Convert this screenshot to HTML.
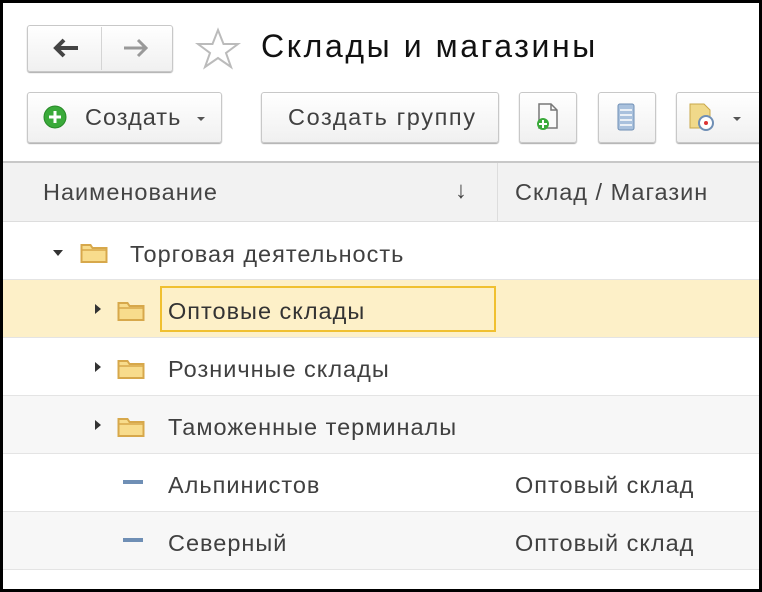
<!DOCTYPE html><html><head><style>
body{margin:0;width:762px;height:592px;background:#000;position:relative;overflow:hidden;font-family:"Liberation Sans",Arial,sans-serif}
#w{position:absolute;left:3px;top:3px;width:756px;height:586px;background:#fff;overflow:hidden}
.a{position:absolute}
.btn{position:absolute;border:1px solid #c8c8c8;border-radius:3px;background:linear-gradient(#fff,#f0f0f0);box-shadow:0 1px 1px #aaa;box-sizing:border-box}
.t{position:absolute;font-size:23.5px;color:#404040;white-space:nowrap;letter-spacing:1px}
.row{position:absolute;left:0;width:756px;height:57px;border-bottom:1px solid #e4e4e4}
.fold{position:absolute;width:28px;height:22px}
</style></head><body><div id="w">
<div class="btn" style="left:24px;top:22px;width:146px;height:47px"></div>
<div class="a" style="left:98px;top:24px;width:1px;height:43px;background:#d4d4d4"></div>
<svg class="a" style="left:48px;top:34px" width="30" height="22"><path d="M27 11H6M13 3L5 11l8 8" fill="none" stroke="#444" stroke-width="4"/></svg>
<svg class="a" style="left:118px;top:34px" width="30" height="22"><path d="M3 11h21M17 3l8 8-8 8" fill="none" stroke="#999" stroke-width="3"/></svg>
<svg class="a" style="left:192px;top:24px" width="46" height="44"><polygon points="23,3 28.5,17 43,17 31,26 36,40 23,31 10,40 15,26 3,17 17.5,17" fill="none" stroke="#bbb" stroke-width="2"/></svg>
<div class="t" style="left:258px;top:25px;font-size:32px;color:#111;letter-spacing:2.6px">Склады и магазины</div>
<div class="btn" style="left:24px;top:89px;width:195px;height:51px"></div>
<svg class="a" style="left:40px;top:102px" width="24" height="24"><circle cx="12" cy="12" r="11" fill="#3aaa3a" stroke="#288a28"/><path d="M12 6v12M6 12h12" stroke="#fff" stroke-width="3"/></svg>
<div class="t" style="left:82px;top:101px">Создать</div>
<div class="a" style="left:194px;top:114px;border:4px solid transparent;border-top:4px solid #555"></div>
<div class="btn" style="left:258px;top:89px;width:238px;height:51px"></div>
<div class="t" style="left:285px;top:101px;letter-spacing:1.6px">Создать группу</div>
<div class="btn" style="left:516px;top:89px;width:58px;height:51px"></div>
<svg class="a" style="left:530px;top:98px" width="30" height="32"><path d="M6 3h12l6 6v18H6z" fill="#fafafa" stroke="#777" stroke-width="1.5"/><path d="M18 3v6h6" fill="none" stroke="#777" stroke-width="1.5"/><circle cx="10" cy="23" r="6" fill="#3aaa3a"/><path d="M10 19v8M6 23h8" stroke="#fff" stroke-width="2"/></svg>
<div class="btn" style="left:595px;top:89px;width:58px;height:51px"></div>
<svg class="a" style="left:612px;top:99px" width="22" height="30"><rect x="3" y="2" width="16" height="26" rx="2" fill="#a9c1dd" stroke="#6f8fb5"/><path d="M5 8h12M5 13h12M5 18h12M5 23h12" stroke="#fff" stroke-width="1.5"/></svg>
<div class="btn" style="left:673px;top:89px;width:90px;height:51px"></div>
<svg class="a" style="left:683px;top:98px" width="34" height="32"><path d="M4 3h14l6 6v18H4z" fill="#f0d98a" stroke="#c9a84a"/><circle cx="20" cy="22" r="7" fill="#fff" stroke="#6f8fb5" stroke-width="2"/><circle cx="20" cy="22" r="2" fill="#d33"/></svg>
<div class="a" style="left:730px;top:114px;border:4px solid transparent;border-top:4px solid #555"></div>
<div class="a" style="left:0;top:158px;width:756px;height:2px;background:#c8c8c8"></div>
<div class="a" style="left:0;top:160px;width:756px;height:58px;background:#f2f2f2;border-bottom:1px solid #ddd"></div>
<div class="a" style="left:494px;top:160px;width:1px;height:58px;background:#ddd"></div>
<div class="t" style="left:40px;top:176px;color:#444">Наименование</div>
<div class="t" style="left:452px;top:174px;color:#444">↓</div>
<div class="t" style="left:512px;top:176px;color:#444">Склад / Магазин</div>
<div class="row" style="top:219px;background:#fff"></div>
<div class="row" style="top:277px;background:#fdf0c8"></div>
<div class="row" style="top:335px;background:#fff"></div>
<div class="row" style="top:393px;background:#f7f7f7"></div>
<div class="row" style="top:451px;background:#fff"></div>
<div class="row" style="top:509px;background:#f7f7f7"></div>
<div class="a" style="left:50px;top:247px;border:5px solid transparent;border-top:6px solid #333"></div>
<div class="fold" style="left:77px;top:239px"><svg width="28" height="22"><path d="M1.5 3h9l2 3h14v14h-25z" fill="#f8dc8c" stroke="#d7a84b" stroke-width="2"/><path d="M1.5 8h25" stroke="#d7a84b" stroke-width="1.5"/></svg></div>
<div class="t" style="left:127px;top:238px">Торговая деятельность</div>
<div class="a" style="left:157px;top:283px;width:336px;height:46px;border:2px solid #f0c030;box-sizing:border-box;background:#fdf0c8"></div>
<div class="a" style="left:92px;top:301px;border:5px solid transparent;border-left:6px solid #333"></div>
<div class="a" style="left:92px;top:359px;border:5px solid transparent;border-left:6px solid #333"></div>
<div class="a" style="left:92px;top:417px;border:5px solid transparent;border-left:6px solid #333"></div>
<div class="fold" style="left:114px;top:297px"><svg width="28" height="22"><path d="M1.5 3h9l2 3h14v14h-25z" fill="#f8dc8c" stroke="#d7a84b" stroke-width="2"/><path d="M1.5 8h25" stroke="#d7a84b" stroke-width="1.5"/></svg></div>
<div class="fold" style="left:114px;top:355px"><svg width="28" height="22"><path d="M1.5 3h9l2 3h14v14h-25z" fill="#f8dc8c" stroke="#d7a84b" stroke-width="2"/><path d="M1.5 8h25" stroke="#d7a84b" stroke-width="1.5"/></svg></div>
<div class="fold" style="left:114px;top:413px"><svg width="28" height="22"><path d="M1.5 3h9l2 3h14v14h-25z" fill="#f8dc8c" stroke="#d7a84b" stroke-width="2"/><path d="M1.5 8h25" stroke="#d7a84b" stroke-width="1.5"/></svg></div>
<div class="t" style="left:165px;top:295px;color:#333">Оптовые склады</div>
<div class="t" style="left:165px;top:353px">Розничные склады</div>
<div class="t" style="left:165px;top:411px">Таможенные терминалы</div>
<div class="a" style="left:120px;top:477px;width:20px;height:4px;background:#6f8fb5"></div>
<div class="a" style="left:120px;top:535px;width:20px;height:4px;background:#6f8fb5"></div>
<div class="t" style="left:165px;top:469px">Альпинистов</div>
<div class="t" style="left:165px;top:527px">Северный</div>
<div class="t" style="left:512px;top:469px">Оптовый склад</div>
<div class="t" style="left:512px;top:527px">Оптовый склад</div>
</div></body></html>
